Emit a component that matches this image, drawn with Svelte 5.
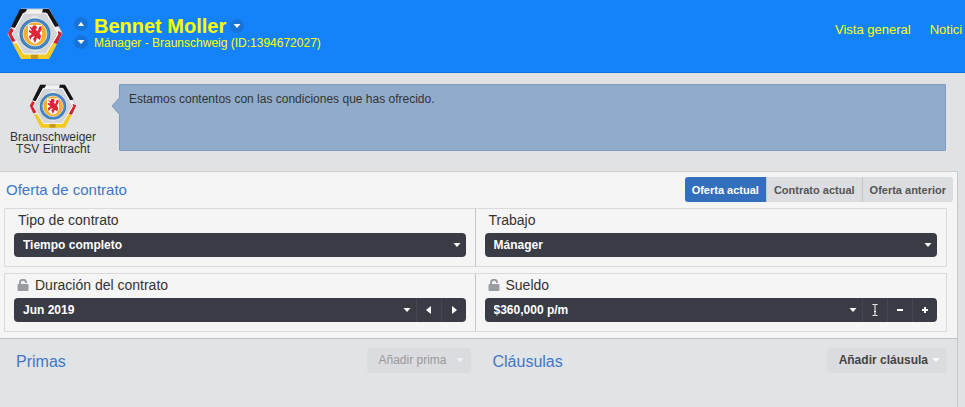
<script>
	const club = 'Braunschweiger TSV Eintracht';
	const tabs = ['Oferta actual', 'Contrato actual', 'Oferta anterior'];
	let activeTab = $state('Oferta actual');
	let contractType = $state('Tiempo completo');
	let job = $state('Mánager');
	let until = $state('Jun 2019');
	let salary = $state('$360,000 p/m');
</script>

{#snippet badge()}
	<svg class="badge" viewBox="0 0 56 52" role="img" aria-label={club}>
		<path d="M14 1H42L55 25L42 50H14L1 26Z" fill="#f1f1f2" stroke="#c9ccd0" />
		<path d="M13 1H20L18 5H16L8 20L4 19ZM36 1H42L52 18L48 19L40 5H35Z" fill="#151515" />
		<path d="M1 25L4 20L7 22L5 26L9 33L5 34ZM51 23L55 25L50 36L46 35L51 26Z" fill="#d3202b" />
		<path d="M6 36L10 35L17 46H39L46 35L50 36L42 51H14Z" fill="#f3cb22" />
		<path d="M24 46H31V51H24Z" fill="#c29b1c" />
		<path d="M17 5H39L51 26L39 46H17L5 26Z" fill="#d3d5d8" stroke="#fafafa" />
		<path d="M17 14L28 7L39 14L45 26L38 39L28 44L18 39L10 26Z" fill="#e6e7e9" />
		<circle cx="28" cy="26" r="15.5" fill="#3b7db9" />
		<circle cx="28" cy="26" r="13.5" fill="none" stroke="#79a7d0" stroke-dasharray="1 1" />
		<circle cx="28" cy="26" r="12" fill="#f8b02c" stroke="#e8edf2" stroke-width="0.8" />
		<path d="M21 17H35V27C35 32 32 34 28 36C24 34 21 32 21 27Z" fill="#fff" />
		<path d="M22 18L25 20L26 17.5H29L30 20L28.5 22L31 23L32 19L34.5 18V22L32.5 25L34 28L33 32L30 30L28 35L26 31L28 28L25 29L23 32L22 28L25 26L22 24V22L25 23Z" fill="#e02336" />
	</svg>
{/snippet}

{#snippet caret(dir)}
	<svg class="caret" viewBox="0 0 8 8" aria-hidden="true">
		{#if dir === 'up'}
			<path d="M1 6H7L4 2Z" />
		{:else if dir === 'left'}
			<path d="M6 0V8L1 4Z" />
		{:else if dir === 'right'}
			<path d="M2 0V8L7 4Z" />
		{:else}
			<path d="M0.5 2H7.5L4 6Z" />
		{/if}
	</svg>
{/snippet}

{#snippet lock()}
	<svg class="lock" viewBox="0 0 12 12" aria-hidden="true">
		<path d="M3 6V3.5A3 2.8 0 0 1 9 3.5V4" fill="none" stroke="#999da1" stroke-width="2" />
		<rect x="0.5" y="5" width="11" height="7" rx="1" fill="#999da1" />
	</svg>
{/snippet}

<header>
	<div class="crest">{@render badge()}</div>
	<div class="steps">
		<button class="round" aria-label="Anterior">{@render caret('up')}</button>
		<button class="round" aria-label="Siguiente">{@render caret('down')}</button>
	</div>
	<div class="who">
		<div class="name">
			<h1>Bennet Moller</h1>
			<button class="round" aria-label="Opciones">{@render caret('down')}</button>
		</div>
		<p>Mánager - Braunschweig (ID:1394672027)</p>
	</div>
	<nav>
		<a href="#general">Vista general</a>
		<a href="#noticias">Notici</a>
	</nav>
</header>

<section class="talk">
	<div class="speaker">
		{@render badge()}
		<span>{club}</span>
	</div>
	<div class="bubble">
		<svg class="tip" viewBox="0 0 9 18" aria-hidden="true">
			<path d="M9 0L1 9L9 18" fill="#91abcb" stroke="#7f9bc0" />
		</svg>
		Estamos contentos con las condiciones que has ofrecido.
	</div>
</section>

<main>
	<section class="offer">
		<div class="top">
			<h2>Oferta de contrato</h2>
			<div class="tabs">
				{#each tabs as tab}
					<button class:active={tab === activeTab} onclick={() => (activeTab = tab)}>{tab}</button>
				{/each}
			</div>
		</div>

		<div class="fields">
			<div class="field">
				<label for="type">Tipo de contrato</label>
				<div class="control">
					<select id="type" bind:value={contractType}>
						<option>Tiempo completo</option>
					</select>
					{@render caret('down')}
				</div>
			</div>
			<div class="field">
				<label for="job">Trabajo</label>
				<div class="control">
					<select id="job" bind:value={job}>
						<option>Mánager</option>
					</select>
					{@render caret('down')}
				</div>
			</div>
		</div>

		<div class="fields">
			<div class="field">
				<label for="until">{@render lock()}Duración del contrato</label>
				<div class="control">
					<select id="until" bind:value={until}>
						<option>Jun 2019</option>
					</select>
					{@render caret('down')}
					<button aria-label="Fecha anterior">{@render caret('left')}</button>
					<button aria-label="Fecha siguiente">{@render caret('right')}</button>
				</div>
			</div>
			<div class="field">
				<label for="salary">{@render lock()}Sueldo</label>
				<div class="control">
					<select id="salary" bind:value={salary}>
						<option>$360,000 p/m</option>
					</select>
					{@render caret('down')}
					<button aria-label="Escribir cantidad">
						<svg class="sign" viewBox="0 0 12 12" aria-hidden="true">
							<path d="M3.5 0.5H5.5L6 1L6.5 0.5H8.5M6 1V11M3.5 11.5H5.5L6 11L6.5 11.5H8.5M5 7.5H7" fill="none" stroke="#fff" />
						</svg>
					</button>
					<button aria-label="Menos">
						<svg class="sign" viewBox="0 0 12 12" aria-hidden="true"><path d="M3 5H9V7H3Z" fill="#fff" /></svg>
					</button>
					<button aria-label="Más">
						<svg class="sign" viewBox="0 0 12 12" aria-hidden="true"><path d="M3 5H5V3H7V5H9V7H7V9H5V7H3Z" fill="#fff" /></svg>
					</button>
				</div>
			</div>
		</div>
	</section>

	<section class="extras">
		<div class="extra">
			<h2>Primas</h2>
			<button class="add" disabled>Añadir prima {@render caret('down')}</button>
		</div>
		<div class="extra">
			<h2>Cláusulas</h2>
			<button class="add">Añadir cláusula {@render caret('down')}</button>
		</div>
	</section>
</main>

<style>
	:global(body) {
		margin: 0;
		background: #e1e2e4;
		color: #333;
		font-family: 'Liberation Sans', Arial, sans-serif;
		font-size: 12px;
	}
	:global(#app) {
		display: flex;
		flex-direction: column;
		min-height: 100vh;
	}
	h1,
	h2,
	p {
		margin: 0;
		font-weight: normal;
	}
	button,
	select {
		border: 0;
		padding: 0;
		font: inherit;
		color: inherit;
		background: none;
		cursor: pointer;
	}
	.caret {
		display: block;
		flex: none;
		width: 8px;
		height: 8px;
		fill: #fff;
	}

	header {
		display: flex;
		height: 72px;
		border-bottom: 1px solid #0b6fe0;
		background: #1482fa;
		color: #ff0;
	}
	.crest {
		width: 56px;
		padding: 8px 11px 0 7px;
	}
	.badge {
		display: block;
		width: 100%;
	}
	.steps {
		display: flex;
		flex-direction: column;
		gap: 4px;
		width: 20px;
		padding-top: 17px;
	}
	.round {
		display: flex;
		align-items: center;
		justify-content: center;
		width: 14px;
		height: 14px;
		border-radius: 50%;
		background: #1873d8;
	}
	.who {
		flex: 1;
		padding-top: 15px;
		white-space: nowrap;
	}
	.name {
		display: flex;
		align-items: center;
		gap: 4px;
	}
	h1 {
		font-size: 20px;
		line-height: 22px;
		font-weight: bold;
	}
	.who p {
		line-height: 13px;
	}
	nav {
		display: flex;
		gap: 19px;
		width: 130px;
		padding-top: 22px;
		font-size: 13px;
		line-height: 16px;
		white-space: nowrap;
	}
	nav a {
		color: inherit;
		text-decoration: none;
	}

	.talk {
		display: flex;
		align-items: flex-start;
		padding: 11px 19px 16px 0;
	}
	.speaker {
		display: flex;
		flex-direction: column;
		align-items: center;
		width: 106px;
		margin-right: 13px;
		line-height: 12px;
		text-align: center;
	}
	.speaker .badge {
		width: 48px;
		margin-bottom: 2px;
	}
	.speaker span {
		width: 96px;
	}
	.bubble {
		position: relative;
		flex: 1;
		box-sizing: border-box;
		min-height: 67px;
		padding: 7px 9px;
		border: 1px solid #7f9bc0;
		border-radius: 1px;
		background: #91abcb;
		line-height: 14px;
	}
	.tip {
		position: absolute;
		top: 12px;
		left: -9px;
		width: 9px;
		height: 18px;
	}

	main {
		display: flex;
		flex: 1;
		flex-direction: column;
		margin-right: 7px;
		border-top: 1px solid #cdcfd1;
		border-right: 1px solid #c5c9cd;
	}
	h2 {
		color: #3f78c5;
		font-size: 16px;
		line-height: 20px;
	}
	.offer {
		padding-bottom: 6px;
		background: #f5f5f5;
	}
	.top {
		display: flex;
		align-items: center;
		justify-content: space-between;
		height: 36px;
		padding: 0 4px 0 6px;
	}
	.offer h2 {
		font-size: 15px;
	}
	.tabs {
		display: flex;
	}
	.tabs button {
		height: 25px;
		padding: 0 7px;
		border-left: 1px solid #c4c6ca;
		background: #dcdde0;
		color: #555;
		font-size: 11px;
		font-weight: bold;
	}
	.tabs button:first-child {
		border-left: 0;
		border-radius: 3px 0 0 3px;
	}
	.tabs button:last-child {
		border-radius: 0 3px 3px 0;
	}
	.tabs .active {
		background: #346fbd;
		color: #fff;
	}

	.fields {
		display: grid;
		grid-template-columns: 1fr 1fr;
		margin: 0 10px 6px 4px;
		border: 1px solid #dadada;
		border-radius: 1px;
	}
	.fields:last-child {
		margin-bottom: 0;
	}
	.field {
		padding: 0 9px 9px;
	}
	.field:first-child {
		border-right: 1px solid #c4c6c8;
	}
	label {
		display: flex;
		align-items: center;
		height: 22px;
		padding: 0 0 2px 4px;
		font-size: 14px;
	}
	.lock {
		width: 12px;
		height: 12px;
		margin: 0 6px 0 -1px;
	}
	.control {
		display: flex;
		align-items: center;
		height: 24px;
		overflow: hidden;
		border-radius: 4px;
		background: #393c44;
		color: #fff;
		font-weight: bold;
	}
	select {
		flex: 1;
		height: 24px;
		padding-left: 9px;
		appearance: none;
	}
	.control > .caret {
		margin-right: 5px;
		pointer-events: none;
	}
	.control button {
		display: flex;
		align-items: center;
		justify-content: center;
		width: 25px;
		height: 24px;
		border-left: 1px solid #44474f;
	}
	.sign {
		width: 12px;
		height: 12px;
	}

	.extras {
		display: grid;
		flex: 1;
		grid-template-columns: 1fr 1fr;
		gap: 6px;
		border-top: 1px solid #bcc3c9;
		padding: 9px 10px 0 0;
		background: #e0e4e7;
	}
	.extra {
		display: flex;
		align-items: flex-start;
		justify-content: space-between;
		padding-left: 16px;
	}
	.extra h2 {
		padding-top: 4px;
	}
	.add {
		display: flex;
		align-items: center;
		justify-content: space-between;
		gap: 4px;
		min-width: 104px;
		height: 25px;
		padding: 0 7px 0 12px;
		border-radius: 4px;
		background: #dbdce0;
		color: #444;
		font-weight: bold;
	}
	.add:disabled {
		color: #999;
		font-weight: normal;
	}
	.add:disabled .caret {
		opacity: 0.6;
	}
</style>
